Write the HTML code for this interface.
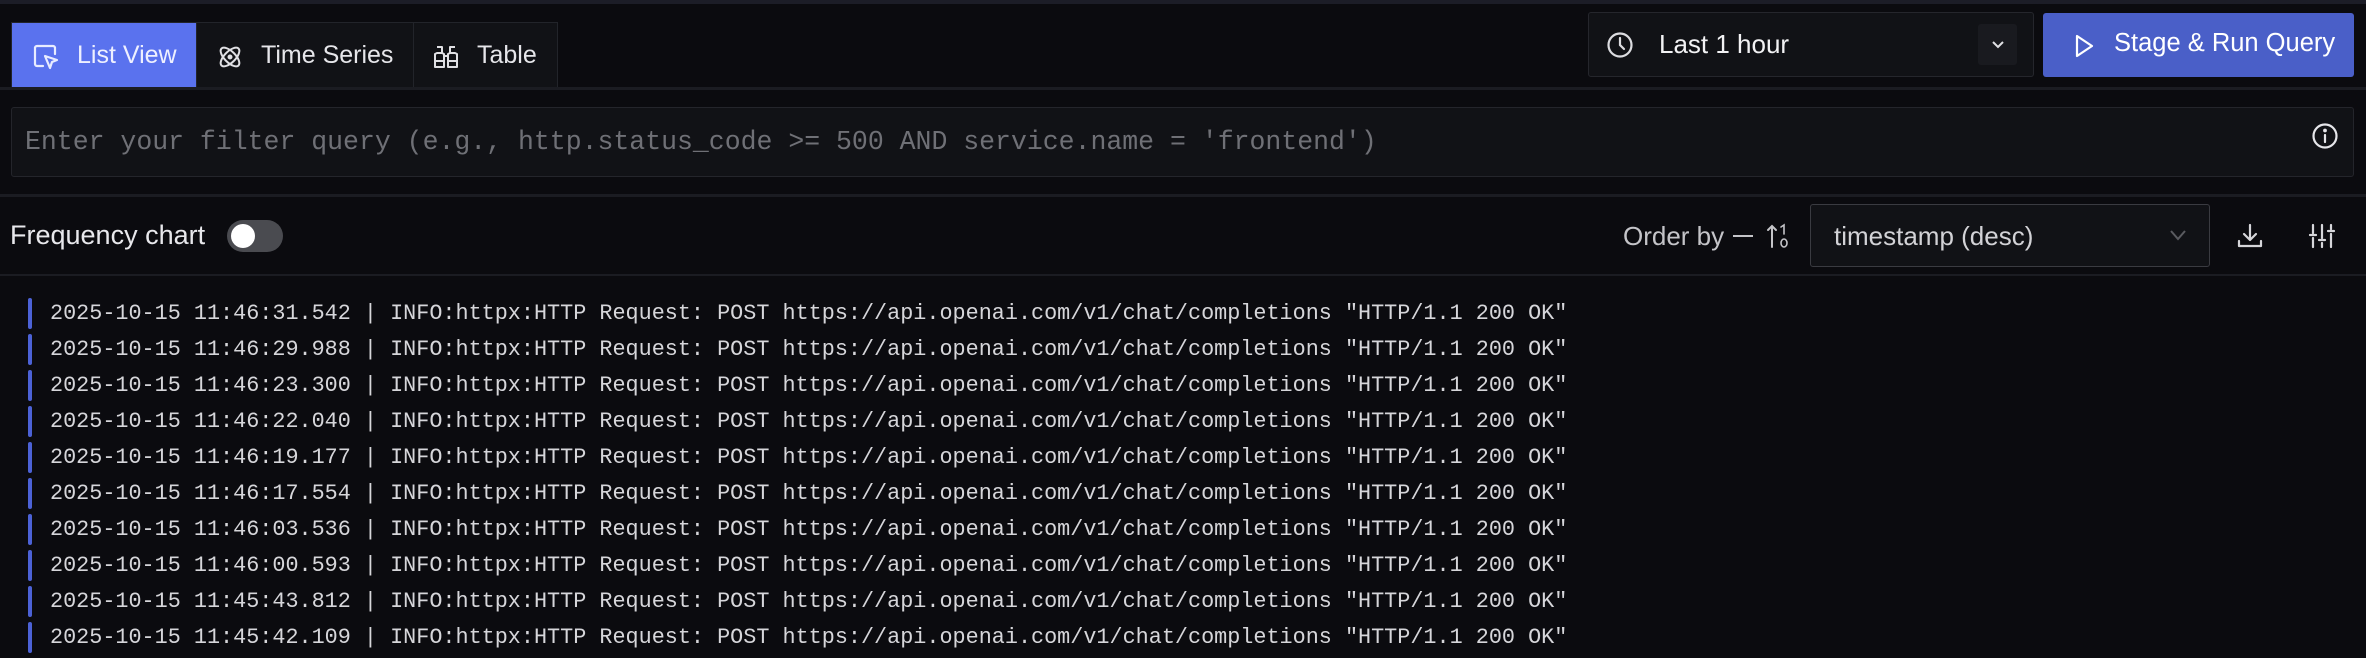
<!DOCTYPE html>
<html><head><meta charset="utf-8"><style>
*{margin:0;padding:0;box-sizing:border-box}
body{width:2366px;height:658px;background:#0b0b0f;position:relative;overflow:hidden;font-family:"Liberation Sans",sans-serif;color:#e6e6ea}
.a{position:absolute}
.t{position:absolute;white-space:nowrap;line-height:1}
.mono{font-family:"Liberation Mono",monospace}
.row{position:absolute;left:0;height:36px;width:2366px}
.row .bar{position:absolute;left:28px;top:0;width:4px;height:31px;background:#4c62d6;border-radius:2px}
.row .tx{position:absolute;left:50px;top:4px;font-family:"Liberation Mono",monospace;font-size:21.8px;color:#d6d6da;white-space:pre;line-height:24px}
</style></head><body>
<div class="a" style="left:0;top:0;width:2366px;height:4px;background:#1c1d27"></div>
<div class="a" style="left:11px;top:22px;width:547px;height:67px;background:#111216;border:1px solid #22242a"></div>
<div class="a" style="left:12px;top:23px;width:184px;height:65px;background:#5a72ee"></div>
<div class="a" style="left:196px;top:23px;width:1px;height:65px;background:#22242a"></div>
<div class="a" style="left:413px;top:23px;width:1px;height:65px;background:#22242a"></div>
<svg class="a" style="left:32px;top:43px" width="28" height="28" viewBox="0 0 28 28" fill="none" stroke="#e8ecff" stroke-width="2.2" stroke-linejoin="round" stroke-linecap="round"><path d="M11 23H5a2 2 0 0 1-2-2V5a2 2 0 0 1 2-2h16a2 2 0 0 1 2 2v6"/><path d="M13 13l12 4-5 2-2 6z"/></svg>
<div class="t" style="left:77px;top:43px;font-size:25px;color:#eef0ff">List View</div>
<svg class="a" style="left:216px;top:43px" width="28" height="28" viewBox="0 0 28 28" fill="none" stroke="#e0e0e4" stroke-width="2"><ellipse cx="14" cy="14" rx="12" ry="5.5" transform="rotate(45 14 14)"/><ellipse cx="14" cy="14" rx="12" ry="5.5" transform="rotate(-45 14 14)"/><circle cx="14" cy="14" r="1.5" fill="#e0e0e4"/></svg>
<div class="t" style="left:261px;top:43px;font-size:25px;color:#e6e6ea">Time Series</div>
<svg class="a" style="left:432px;top:44px" width="28" height="26" viewBox="0 0 28 26" fill="none" stroke="#e0e0e4" stroke-width="2" stroke-linejoin="round"><path d="M5 3h5v6M18 9V3h5"/><path d="M3 23V10l2-1h5l2 1v13z M16 23V10l2-1h5l2 1v13z"/><path d="M12 12h4"/><path d="M3 17h9M16 17h9"/></svg>
<div class="t" style="left:477px;top:43px;font-size:25px;color:#e6e6ea">Table</div>
<div class="a" style="left:0;top:87px;width:2366px;height:3px;background:#1b1c22"></div>
<div class="a" style="left:1588px;top:12px;width:446px;height:65px;background:#111216;border:1px solid #25262c;border-radius:3px"></div>
<svg class="a" style="left:1606px;top:31px" width="28" height="28" viewBox="0 0 28 28" fill="none" stroke="#dcdce0" stroke-width="2.2" stroke-linecap="round"><circle cx="14" cy="14" r="11.5"/><path d="M14 7v7l4 4"/></svg>
<div class="t" style="left:1659px;top:31px;font-size:26px;color:#f2f2f4">Last 1 hour</div>
<div class="a" style="left:1978px;top:24px;width:39px;height:41px;background:#191a1f;border-radius:3px"></div>
<svg class="a" style="left:1990px;top:39px" width="16" height="12" viewBox="0 0 16 12" fill="none" stroke="#e0e0e4" stroke-width="2"><path d="M3 3l5 5 5-5"/></svg>
<div class="a" style="left:2043px;top:13px;width:311px;height:64px;background:#4a5fc8;border-radius:3px"></div>
<svg class="a" style="left:2072px;top:33px" width="24" height="26" viewBox="0 0 24 26" fill="none" stroke="#fff" stroke-width="2.2" stroke-linejoin="round"><path d="M5 3l15 10-15 10z"/></svg>
<div class="t" style="left:2114px;top:31px;font-size:25.5px;color:#fff">Stage &amp; Run Query</div>
<div class="a" style="left:11px;top:107px;width:2343px;height:70px;background:#111216;border:1px solid #24252b;border-radius:3px"></div>
<div class="t mono" style="left:25px;top:129px;font-size:26.5px;color:#6f7076">Enter your filter query (e.g., http.status_code &gt;= 500 AND service.name = 'frontend')</div>
<svg class="a" style="left:2311px;top:122px" width="28" height="28" viewBox="0 0 28 28" fill="none" stroke="#e6e6ea" stroke-width="2.2" stroke-linecap="round"><circle cx="14" cy="14" r="11.5"/><path d="M14 13v7"/><circle cx="14" cy="8.5" r="0.8" fill="#e6e6ea"/></svg>
<div class="a" style="left:0;top:194px;width:2366px;height:3px;background:#1b1c22"></div>
<div class="t" style="left:10px;top:222px;font-size:27px;color:#e8e8ec">Frequency chart</div>
<div class="a" style="left:227px;top:220px;width:56px;height:32px;background:#4a4b50;border-radius:16px"></div>
<div class="a" style="left:231px;top:224px;width:24px;height:24px;background:#fff;border-radius:50%"></div>
<div class="t" style="left:1623px;top:223px;font-size:26px;color:#c4c4c8">Order by</div>
<div class="a" style="left:1733px;top:235px;width:20px;height:2px;background:#c4c4c8"></div>
<svg class="a" style="left:1766px;top:222px" width="26" height="28" viewBox="0 0 26 28" fill="none" stroke="#c4c4c8" stroke-width="2" stroke-linecap="round"><path d="M6 25V4M2 8l4-4 4 4"/><path d="M15 5l3-2v9" stroke-width="1.6"/><ellipse cx="18" cy="21" rx="3" ry="4" stroke-width="1.6"/></svg>
<div class="a" style="left:1810px;top:204px;width:400px;height:63px;background:#111216;border:1.5px solid #3a3b41;border-radius:3px"></div>
<div class="t" style="left:1834px;top:223px;font-size:26px;color:#d2d2d6">timestamp (desc)</div>
<svg class="a" style="left:2168px;top:228px" width="20" height="14" viewBox="0 0 20 14" fill="none" stroke="#5a5b60" stroke-width="2"><path d="M3 3l7 8 7-8"/></svg>
<svg class="a" style="left:2236px;top:222px" width="28" height="28" viewBox="0 0 28 28" fill="none" stroke="#d6d6da" stroke-width="2.2" stroke-linecap="round" stroke-linejoin="round"><path d="M14 3v15M8 12l6 6 6-6"/><path d="M3 19v5h22v-5"/></svg>
<svg class="a" style="left:2308px;top:222px" width="28" height="28" viewBox="0 0 28 28" fill="none" stroke="#d6d6da" stroke-width="2.2" stroke-linecap="round"><path d="M5 3v8M5 16v9M14 3v13M14 21v4M23 3v4M23 12v13M2 13h6M11 18h6M20 9h6"/></svg>
<div class="a" style="left:0;top:274px;width:2366px;height:2px;background:#1b1c22"></div>
<div class="row" style="top:298px"><div class="bar"></div><div class="tx">2025-10-15 11:46:31.542 | INFO:httpx:HTTP Request: POST https://api.openai.com/v1/chat/completions "HTTP/1.1 200 OK"</div></div>
<div class="row" style="top:334px"><div class="bar"></div><div class="tx">2025-10-15 11:46:29.988 | INFO:httpx:HTTP Request: POST https://api.openai.com/v1/chat/completions "HTTP/1.1 200 OK"</div></div>
<div class="row" style="top:370px"><div class="bar"></div><div class="tx">2025-10-15 11:46:23.300 | INFO:httpx:HTTP Request: POST https://api.openai.com/v1/chat/completions "HTTP/1.1 200 OK"</div></div>
<div class="row" style="top:406px"><div class="bar"></div><div class="tx">2025-10-15 11:46:22.040 | INFO:httpx:HTTP Request: POST https://api.openai.com/v1/chat/completions "HTTP/1.1 200 OK"</div></div>
<div class="row" style="top:442px"><div class="bar"></div><div class="tx">2025-10-15 11:46:19.177 | INFO:httpx:HTTP Request: POST https://api.openai.com/v1/chat/completions "HTTP/1.1 200 OK"</div></div>
<div class="row" style="top:478px"><div class="bar"></div><div class="tx">2025-10-15 11:46:17.554 | INFO:httpx:HTTP Request: POST https://api.openai.com/v1/chat/completions "HTTP/1.1 200 OK"</div></div>
<div class="row" style="top:514px"><div class="bar"></div><div class="tx">2025-10-15 11:46:03.536 | INFO:httpx:HTTP Request: POST https://api.openai.com/v1/chat/completions "HTTP/1.1 200 OK"</div></div>
<div class="row" style="top:550px"><div class="bar"></div><div class="tx">2025-10-15 11:46:00.593 | INFO:httpx:HTTP Request: POST https://api.openai.com/v1/chat/completions "HTTP/1.1 200 OK"</div></div>
<div class="row" style="top:586px"><div class="bar"></div><div class="tx">2025-10-15 11:45:43.812 | INFO:httpx:HTTP Request: POST https://api.openai.com/v1/chat/completions "HTTP/1.1 200 OK"</div></div>
<div class="row" style="top:622px"><div class="bar"></div><div class="tx">2025-10-15 11:45:42.109 | INFO:httpx:HTTP Request: POST https://api.openai.com/v1/chat/completions "HTTP/1.1 200 OK"</div></div>
</body></html>
